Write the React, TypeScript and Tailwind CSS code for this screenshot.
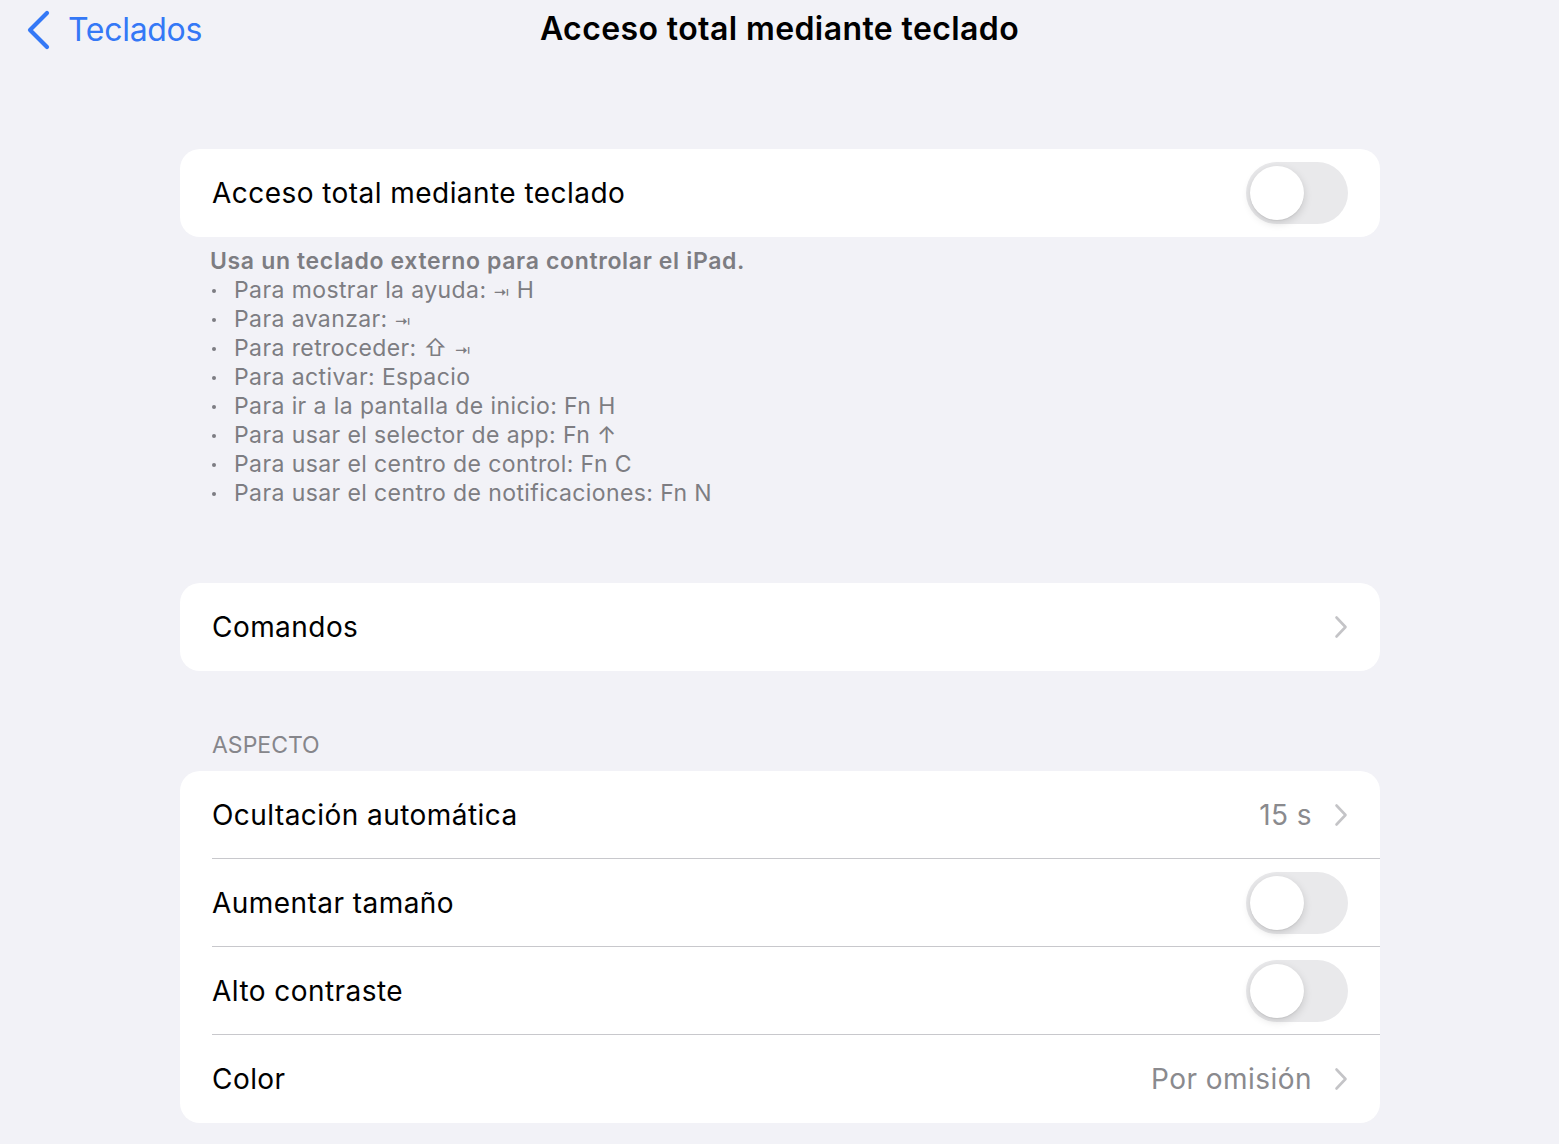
import React from "react";

const font = { fontFamily: "Inter, 'Noto Sans', sans-serif" };

function Toggle() {
  return (
    <div className="relative w-[102px] h-[62px] rounded-full bg-[#e9e9eb]">
      <div className="absolute left-[4px] top-[4px] w-[54px] h-[54px] rounded-full bg-white shadow-[0_3px_8px_rgba(0,0,0,0.15),0_1px_1px_rgba(0,0,0,0.06)]" />
    </div>
  );
}

function Chevron() {
  return (
    <svg width="14" height="24" viewBox="0 0 14 24" fill="none">
      <path d="M2.5 2.5L11.5 12L2.5 21.5" stroke="#c4c4c7" strokeWidth="2.6" strokeLinecap="round" strokeLinejoin="round" />
    </svg>
  );
}

function Row({ label, right, sep }: { label: string; right: React.ReactNode; sep?: boolean }) {
  return (
    <div className="pl-[32px]">
      <div className={"flex items-center justify-between h-[88px] pr-[32px] " + (sep ? "border-b border-[#c8c8cc]" : "")}>
        <span className="text-[28px] text-black tracking-[0.45px]">{label}</span>
        {right}
      </div>
    </div>
  );
}

function Value({ text }: { text: string }) {
  return (
    <div className="flex items-center gap-[22px]">
      <span className="text-[28px] text-[#8a8a8e] tracking-[0.45px]">{text}</span>
      <Chevron />
    </div>
  );
}

const Tab = () => <span className="text-[16px] leading-[16px]">⇥</span>;

const bullets: React.ReactNode[] = [
  <>Para mostrar la ayuda: <Tab /> H</>,
  <>Para avanzar: <Tab /></>,
  <>Para retroceder: ⇧ <Tab /></>,
  <>Para activar: Espacio</>,
  <>Para ir a la pantalla de inicio: Fn H</>,
  <>Para usar el selector de app: Fn ↑</>,
  <>Para usar el centro de control: Fn C</>,
  <>Para usar el centro de notificaciones: Fn N</>,
];

export default function App() {
  return (
    <div className="w-[1559px] h-[1144px] bg-[#f2f2f7] overflow-hidden" style={font}>
      <div className="relative h-[60px] flex items-center">
        <div className="absolute left-[26px] top-[10px] flex items-center gap-[16px]">
          <svg width="26" height="40" viewBox="0 0 26 40" fill="none">
            <path d="M21 3L4 20L21 37" stroke="#3478f6" strokeWidth="4.2" strokeLinecap="round" strokeLinejoin="round" />
          </svg>
          <span className="text-[32px] text-[#3478f6] leading-[40px] tracking-[-0.3px]">Teclados</span>
        </div>
        <div className="w-full text-center text-[32px] font-semibold text-black leading-[40px] -mt-[2px] tracking-[0.4px]">
          Acceso total mediante teclado
        </div>
      </div>

      <div className="w-[1200px] ml-[180px] mt-[89px]">
        <div className="bg-white rounded-[20px] overflow-hidden">
          <Row label="Acceso total mediante teclado" right={<Toggle />} />
        </div>
        <div className="pl-[30px] pt-[10px] text-[23px] text-[#7d7d82] leading-[29px] tracking-[0.4px]">
          <div className="font-semibold tracking-[0.65px] h-[29px]">Usa un teclado externo para controlar el iPad.</div>
          {bullets.map((b, i) => (
            <div key={i} className="flex items-center h-[29px] overflow-visible">
              <span className="w-[24px] flex items-center">
                <span className="ml-[2px] w-[4px] h-[4px] rounded-full bg-[#7d7d82]" />
              </span>
              <span className="leading-[29px] whitespace-nowrap">{b}</span>
            </div>
          ))}
        </div>

        <div className="bg-white rounded-[20px] overflow-hidden mt-[75px]">
          <Row label="Comandos" right={<Chevron />} />
        </div>

        <div className="pl-[32px] mt-[58px] h-[42px] text-[23px] text-[#86868b] leading-[32px]">ASPECTO</div>

        <div className="bg-white rounded-[20px] overflow-hidden">
          <Row label="Ocultación automática" right={<Value text="15 s" />} sep />
          <Row label="Aumentar tamaño" right={<Toggle />} sep />
          <Row label="Alto contraste" right={<Toggle />} sep />
          <Row label="Color" right={<Value text="Por omisión" />} />
        </div>
      </div>
    </div>
  );
}
